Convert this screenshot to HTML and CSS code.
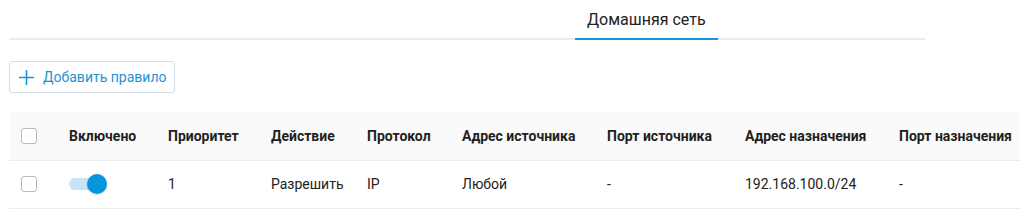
FILE: index.html
```html
<!DOCTYPE html>
<html lang="ru">
<head>
<meta charset="utf-8">
<link rel="stylesheet" href="styles.css">
</head>
<body>
<div class="page">
  <div class="tabs">
    <div class="tab active">Домашняя сеть</div>
  </div>
  <div class="toolbar">
    <button class="add-btn">
      <svg class="plus" width="15" height="15" viewBox="0 0 15 15"><path d="M7.5 0V15M0 7.5H15" stroke="currentColor" stroke-width="1.6"/></svg>
      <span>Добавить правило</span>
    </button>
  </div>
  <table class="rules">
    <colgroup>
      <col style="width:48px"><col style="width:99px"><col style="width:103px"><col style="width:96px"><col style="width:95px"><col style="width:145px"><col style="width:138px"><col style="width:154px"><col style="width:133px">
    </colgroup>
    <thead>
      <tr>
        <th><span class="cb"></span></th>
        <th>Включено</th>
        <th>Приоритет</th>
        <th>Действие</th>
        <th>Протокол</th>
        <th>Адрес источника</th>
        <th>Порт источника</th>
        <th>Адрес назначения</th>
        <th>Порт назначения</th>
      </tr>
    </thead>
    <tbody>
      <tr>
        <td><span class="cb"></span></td>
        <td><span class="toggle"><span class="knob"></span></span></td>
        <td>1</td>
        <td>Разрешить</td>
        <td>IP</td>
        <td>Любой</td>
        <td>-</td>
        <td>192.168.100.0/24</td>
        <td>-</td>
      </tr>
    </tbody>
  </table>
</div>
</body>
</html>
```

FILE: styles.css
```css
html, body { margin: 0; padding: 0; background: #fff; }
body { font-family: Roboto, "Noto Sans", sans-serif; color: #222; }
.page { padding: 0 7px 0 9px; }
.tabs {
  width: 916px;
  display: flex;
  padding-left: 566px;
  box-sizing: border-box;
  border-bottom: 2px solid #ebebeb;
  height: 40px;
}
.tab {
  font-size: 16px;
  padding: 10px 12px 0;
  height: 38px;
  box-sizing: border-box;
  line-height: 19px;
  color: #222;
}
.tab.active { border-bottom: 2px solid #1596d8; height: 40px; }
.toolbar { padding-top: 21px; height: 31px; }
.add-btn {
  display: flex;
  align-items: center;
  gap: 9px;
  height: 32px;
  padding: 0 8px 0 9px;
  border: 1px solid #cfdde8;
  border-radius: 3px;
  background: #fff;
  color: #1e93d0;
  font-family: Roboto, sans-serif;
  font-size: 14px;
}
.plus { display: block; }
.rules {
  margin-top: 20px;
  border-collapse: collapse;
  table-layout: fixed;
  width: 1011px;
}
.rules th, .rules td {
  text-align: left;
  padding: 0 0 0 12px;
  height: 48px;
  box-sizing: border-box;
  white-space: nowrap;
  vertical-align: middle;
}
.rules th {
  background: #fafafa;
  font-weight: 700;
  font-size: 14px;
  color: #1f1f1f;
  border-bottom: 1px solid #ececec;
}
.rules td {
  font-size: 14px;
  border-bottom: 1px solid #ececec;
}
.cb {
  display: block;
  width: 14px;
  height: 14px;
  border: 1px solid #b9b9b9;
  border-radius: 3px;
  background: #fff;
}
.toggle {
  display: block;
  position: relative;
  width: 32px;
  height: 12px;
  border-radius: 6px;
  background: #c8e4f6;
}
.knob {
  position: absolute;
  right: -6px;
  top: -4px;
  width: 20px;
  height: 20px;
  border-radius: 50%;
  background: #0696de;
  box-shadow: 0 1px 2px rgba(0,0,0,0.15);
}
```
